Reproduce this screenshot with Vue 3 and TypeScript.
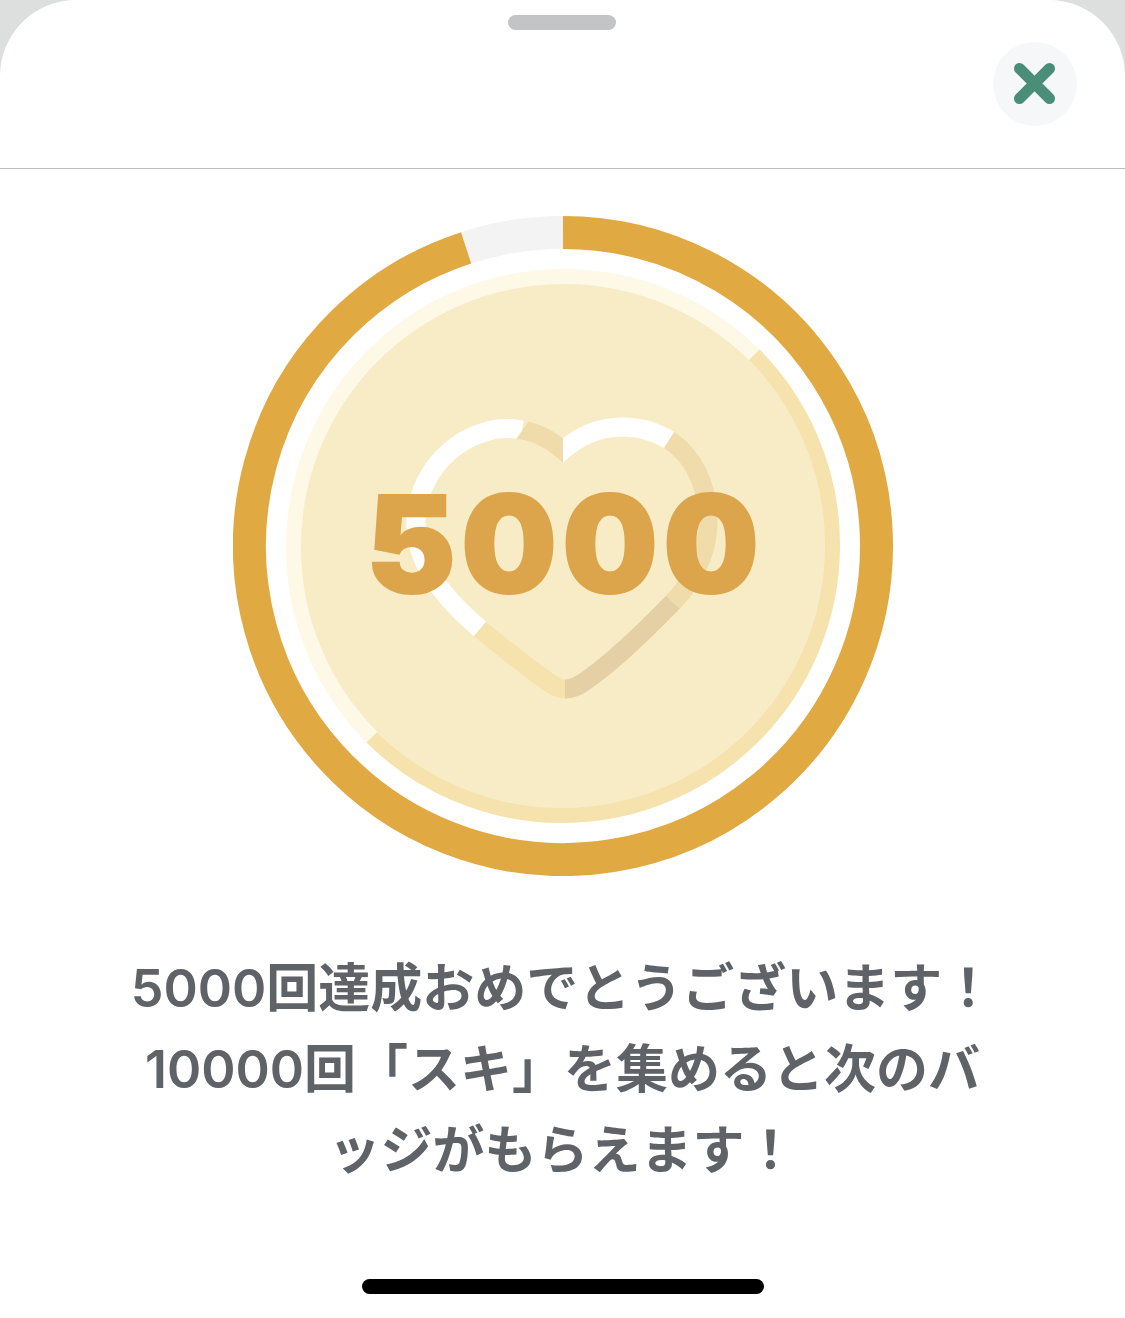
<script setup lang="ts">
interface Segment {
  d: string;
  color: string;
  clip?: string;
}

const CX = 563;
const CY = 546;

// point on a circle, angle in degrees clockwise from 12 o'clock
const polar = (r: number, deg: number) => {
  const a = (deg * Math.PI) / 180;
  return `${(CX + r * Math.sin(a)).toFixed(2)} ${(CY - r * Math.cos(a)).toFixed(2)}`;
};

const arc = (r: number, from: number, to: number) => {
  const large = to - from > 180 ? 1 : 0;
  return `M${polar(r, from)} A${r} ${r} 0 ${large} 1 ${polar(r, to)}`;
};

const progressPath = arc(313.5, 0, 342);
const restPath = arc(313.5, 342, 360);
const coinLight = arc(270.5, 225, 405);
const coinShade = arc(270.5, 45, 225);

const heart: Segment[] = [
  { d: 'M522 430 C470 420 416 466 416 523 C416 565 444 598 480 629', color: '#ffffff' },
  { d: 'M575 461 C553 440 539 433 522 430 C515 429 510 428 505 428', color: '#efdcaa', clip: 'url(#heart-left)' },
  { d: 'M480 629 C505 650 525 665 544 679 C553 685 558 689 565 689', color: '#f6e2ac' },
  { d: 'M565 689 C572 689 577 687 584 682 C612 663 644 632 673 602', color: '#e5cfa5' },
  { d: 'M673 602 C690 585 708 555 708 523 C708 486 694 456 669 440', color: '#f0dcaa' },
  { d: 'M669 440 C656 432 640 427 623 427 C600 427 578 434 551 461', color: '#ffffff', clip: 'url(#heart-right)' },
];
</script>

<template>
  <div class="sheet">
    <header class="sheet-header">
      <div class="grabber"></div>
      <button class="close-btn" aria-label="閉じる">
        <svg width="44" height="44" viewBox="0 0 44 44">
          <path d="M6.5 6.5 L36.5 36.5 M36.5 6.5 L6.5 36.5" class="close-icon" />
        </svg>
      </button>
    </header>

    <main class="sheet-body">
      <svg class="badge" width="660" height="660" viewBox="233 216 660 660">
        <defs>
          <clipPath id="heart-left"><polygon points="533.5,414 563,414 563,470 506,454" /></clipPath>
          <clipPath id="heart-right"><rect x="563" y="400" width="163" height="100" /></clipPath>
        </defs>

        <path :d="restPath" class="ring" stroke="#f3f3f3" />
        <path :d="progressPath" class="ring" stroke="#e1a942" />

        <circle :cx="CX" :cy="CY" r="263" fill="#f8ecc7" />
        <path :d="coinLight" class="coin-edge" stroke="#fef8e6" />
        <path :d="coinShade" class="coin-edge" stroke="#f6e2ac" />

        <path
          v-for="(seg, i) in heart"
          :key="i"
          :d="seg.d"
          :stroke="seg.color"
          :clip-path="seg.clip"
          class="heart-seg"
        />

        <text x="565" y="593" text-anchor="middle" class="count">5000</text>
      </svg>

      <p class="message">
        5000回達成おめでとうございます！<br />10000回「スキ」を集めると次のバ<br />ッジがもらえます！
      </p>
    </main>

    <div class="home-indicator"></div>
  </div>
</template>

<style>
html,
body {
  margin: 0;
  background: #dcdfde;
}
</style>

<style scoped>
.sheet {
  display: flex;
  flex-direction: column;
  align-items: stretch;
  height: 1318px;
  background: #ffffff;
  border-radius: 76px 76px 0 0;
  font-family: Inter, "Noto Sans CJK JP", sans-serif;
  overflow: hidden;
}

.sheet-header {
  display: flex;
  flex-direction: column;
  align-items: center;
  height: 153px;
  padding-top: 15px;
  border-bottom: 1px solid #bdbdbd;
}

.grabber {
  width: 108px;
  height: 15px;
  margin-right: 1px;
  border-radius: 8px;
  background: #c2c4c6;
}

.close-btn {
  display: flex;
  align-items: center;
  justify-content: center;
  align-self: flex-end;
  width: 84px;
  height: 84px;
  margin: 12px 48px 0 0;
  padding: 0;
  border: none;
  border-radius: 50%;
  background: #f5f7f9;
}

.close-icon {
  fill: none;
  stroke: #4a8e78;
  stroke-width: 11;
  stroke-linecap: round;
}

.sheet-body {
  display: flex;
  flex-direction: column;
  align-items: center;
  padding-top: 47px;
}

.badge {
  display: block;
}

.ring {
  fill: none;
  stroke-width: 33;
}

.coin-edge {
  fill: none;
  stroke-width: 15;
}

.heart-seg {
  fill: none;
  stroke-width: 19;
}

.count {
  font-family: Inter, "Liberation Sans", sans-serif;
  font-size: 135px;
  font-weight: 900;
  letter-spacing: 5px;
  fill: #dca54c;
  stroke: #dca54c;
  stroke-width: 2px;
}

.message {
  margin: 72px 0 0;
  color: #5f6368;
  font-size: 52px;
  font-weight: 600;
  line-height: 81px;
  text-align: center;
  white-space: nowrap;
}

.home-indicator {
  align-self: center;
  width: 402px;
  height: 15px;
  margin-top: auto;
  margin-bottom: 24px;
  border-radius: 8px;
  background: #000000;
}
</style>
